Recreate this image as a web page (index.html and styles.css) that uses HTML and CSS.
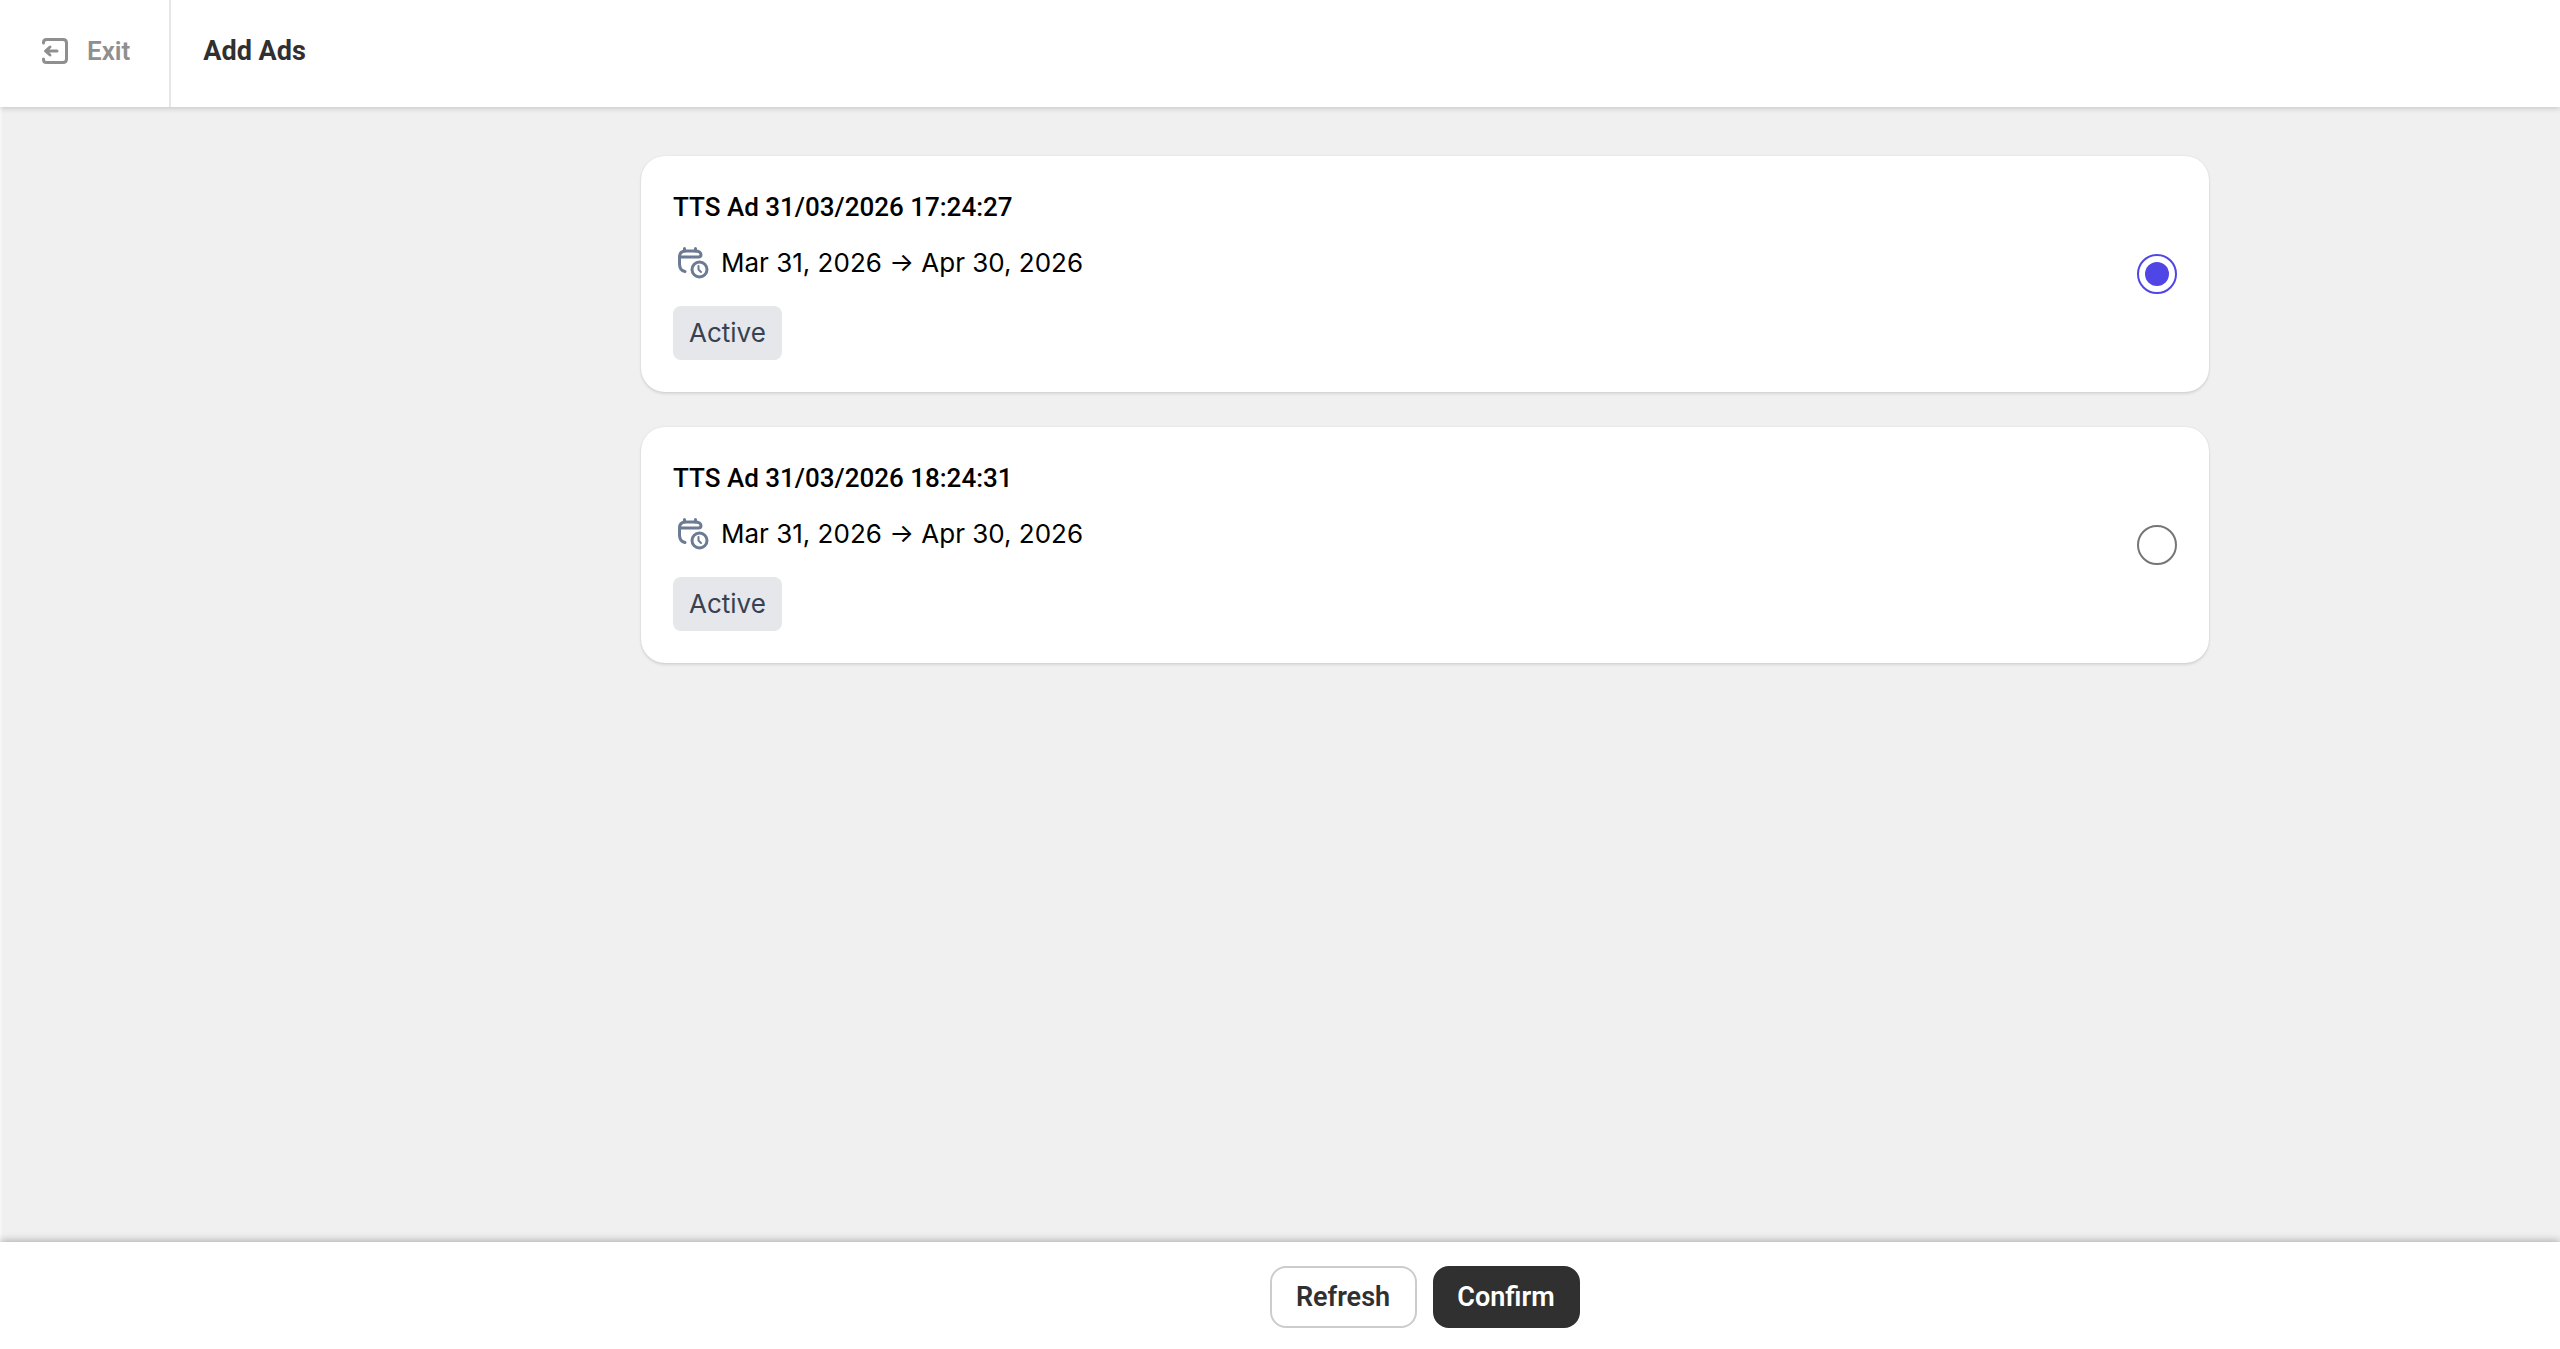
FILE: index.html
```html
<!DOCTYPE html>
<html lang="en">
<head>
    <meta charset="UTF-8">
    <meta name="viewport" content="width=device-width, initial-scale=1.0">
    <title>Add Ads</title>
    <link rel="stylesheet" href="styles.css">
</head>
<body>

<header class="topbar">
    <a href="#" class="exit-link">
        <svg class="exit-icon" viewBox="0 0 26 26" fill="none" stroke="currentColor" stroke-width="3" stroke-linecap="round" stroke-linejoin="round">
            <path d="M1.500 5V4.500Q1.500 1.500 4.500 1.500H21Q24.500 1.500 24.500 5V21Q24.500 24.500 21 24.500H4.500Q1.500 24.500 1.500 21.500V21"/>
            <path d="M15 13H4M8 9L3.500 13L8 17"/>
        </svg>
        <span>Exit</span>
    </a>
    <h1>Add Ads</h1>
</header>

<main class="content">
    <form id="adsForm" class="ads-list" onsubmit="event.preventDefault();">
        <label class="ad-card" for="ad1">
            <span class="ad-info">
                <span class="ad-name">TTS Ad 31/03/2026 17:24:27</span>
                <span class="ad-dates">
                    <svg class="calendar-icon" viewBox="0 0 32 32" fill="none" stroke="currentColor" stroke-width="3" stroke-linecap="round" stroke-linejoin="round">
                        <path d="M7.500 1.500V4M18.500 1.500V4"/>
                        <path d="M8 24.500Q2.500 23.500 2.500 17V10Q2.500 4 8.500 4H18Q23.500 4 24 7.500Q24 10 21.500 10H3"/>
                        <circle cx="22.500" cy="22.500" r="7.500"/>
                        <path d="M21.500 19V22.500L24 25" stroke-width="2"/>
                    </svg>
                    <span>Mar 31, 2026 → Apr 30, 2026</span>
                </span>
                <span class="ad-status">Active</span>
            </span>
            <input type="radio" id="ad1" name="ad" value="1" checked>
        </label>

        <label class="ad-card" for="ad2">
            <span class="ad-info">
                <span class="ad-name">TTS Ad 31/03/2026 18:24:31</span>
                <span class="ad-dates">
                    <svg class="calendar-icon" viewBox="0 0 32 32" fill="none" stroke="currentColor" stroke-width="3" stroke-linecap="round" stroke-linejoin="round">
                        <path d="M7.500 1.500V4M18.500 1.500V4"/>
                        <path d="M8 24.500Q2.500 23.500 2.500 17V10Q2.500 4 8.500 4H18Q23.500 4 24 7.500Q24 10 21.500 10H3"/>
                        <circle cx="22.500" cy="22.500" r="7.500"/>
                        <path d="M21.500 19V22.500L24 25" stroke-width="2"/>
                    </svg>
                    <span>Mar 31, 2026 → Apr 30, 2026</span>
                </span>
                <span class="ad-status">Active</span>
            </span>
            <input type="radio" id="ad2" name="ad" value="2">
        </label>
    </form>
</main>

<footer class="actions">
    <button type="button" class="btn">Refresh</button>
    <button type="submit" form="adsForm" class="btn btn-dark">Confirm</button>
</footer>

</body>
</html>
```

FILE: styles.css
```css
* {
    box-sizing: border-box;
}
body {
    display: flex;
    flex-direction: column;
    min-height: 100vh;
    margin: 0;
    font-family: Inter, sans-serif;
    font-size: 26px;
    line-height: 32px;
    color: #000;
    background-color: #f0f0f0;
}

/* Top bar */
.topbar {
    display: flex;
    align-items: stretch;
    min-height: 107px;
    background-color: #fff;
    box-shadow: 0 1px 6px rgba(0, 0, 0, 0.2);
    font-family: Roboto, sans-serif;
    z-index: 1;
}
.exit-link {
    display: flex;
    align-items: center;
    gap: 19px;
    padding: 0 39px 5px 42px;
    border-right: 2px solid #e6e6e6;
    color: #8f8f8f;
    font-weight: 600;
    text-decoration: none;
}
.exit-icon {
    width: 26px;
    height: 26px;
}
h1 {
    display: flex;
    align-items: center;
    margin: 0;
    padding: 0 32px 5px;
    font-size: 27px;
    font-weight: 700;
    color: #303030;
}

/* Ads */
.content {
    flex: 1;
    padding: 49px 32px 49px 320px;
    border-left: 2px solid #f6f6f6;
}
.ads-list {
    display: flex;
    flex-direction: column;
    gap: 35px;
    max-width: 1568px;
    margin: 0 auto;
}
.ad-card {
    display: flex;
    align-items: center;
    justify-content: space-between;
    padding: 32px;
    background-color: #fff;
    border-radius: 24px;
    box-shadow: 0 2px 3px rgba(0, 0, 0, 0.1), 0 0 2px rgba(0, 0, 0, 0.1);
    cursor: pointer;
}
.ad-info {
    display: flex;
    flex-direction: column;
    align-items: flex-start;
}
.ad-name {
    padding: 3px 0;
    font-family: Roboto, sans-serif;
    font-weight: 500;
}
.ad-dates {
    display: flex;
    align-items: center;
    gap: 12px;
    margin: 21px 0 27px;
    padding-left: 4px;
}
.calendar-icon {
    width: 32px;
    height: 32px;
    color: #6b7b93;
}
.ad-status {
    padding: 11px 16px;
    border-radius: 8px;
    color: #374151;
    background-color: #e5e7eb;
}
input[type="radio"] {
    appearance: none;
    display: grid;
    place-items: center;
    width: 40px;
    height: 40px;
    margin: 0;
    border: 2px solid #767676;
    border-radius: 50%;
    background-color: #fff;
}
input[type="radio"]:checked {
    border-color: #4f46e5;
}
input[type="radio"]:checked::before {
    content: "";
    width: 24px;
    height: 24px;
    border-radius: 50%;
    background-color: #4f46e5;
}

/* Bottom actions */
.actions {
    display: flex;
    align-items: center;
    justify-content: center;
    gap: 16px;
    min-height: 107px;
    padding: 3px 0 0 289px;
    background-color: #fff;
    box-shadow: 0 -1px 8px rgba(0, 0, 0, 0.3);
}
.btn {
    min-width: 147px;
    padding: 13px 22px;
    border: 2px solid #ccc;
    border-radius: 16px;
    font-family: Roboto, sans-serif;
    font-size: 27px;
    font-weight: 600;
    line-height: 32px;
    color: #303030;
    background-color: #fff;
    cursor: pointer;
}
.btn-dark {
    border-color: #303030;
    color: #fff;
    background-color: #303030;
}
```
